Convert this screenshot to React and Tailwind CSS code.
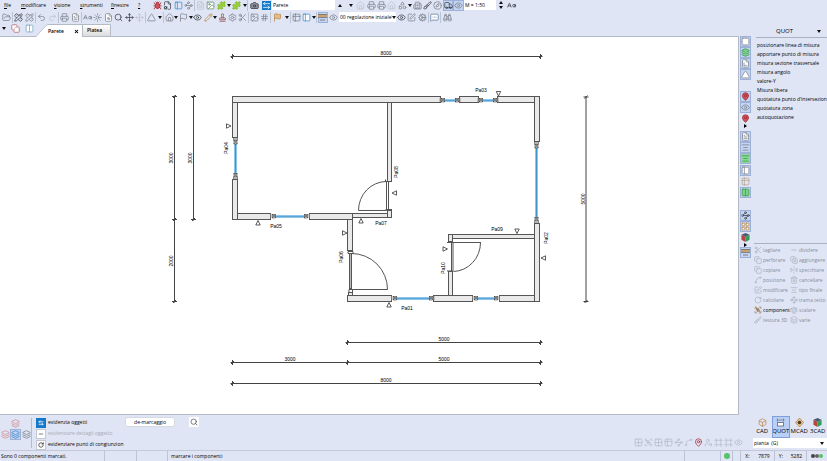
import React from "react";
import {
  FolderOpen, PencilRuler, Undo2, Redo2, Printer, FileText, CaseSensitive, Sun, FileSearch,
  Search, Move, Compass, House, Eye, Pencil, Settings, Copy, Trash2, RotateCw, Box, Layers,
  Binoculars, MessageSquareMore, Image, ArrowLeftRight, Scissors, Minus, CopyPlus, FlipHorizontal2,
  SquarePen, AlignCenter, Scale, Group, Waypoints, X, Triangle, Hash, Truck,
  PanelLeft, Camera, Brush, Grid2x2, Stamp, Frame, Table2, LayoutGrid, Shapes,
  UserSearch, Columns2, Puzzle, MapPin, Flag, FileAxis3d, Building2, Bug, FileCog, Spline, Cog,
} from "lucide-react";

const GRAY = "text-[#7c828d]";
const DARK = "text-[#3d424b]";
const FAINT = "text-[#bcc2cf]";
const PAPER = "text-[#7c828d] fill-white";
const RED = "text-[#a3262e] fill-[#d0565c]";
const ROSE = "text-[#cf8f95]";
const GREEN = "text-[#2f9e44] fill-[#7fd08d]";
const LIME = "text-[#7bb51d] fill-[#9bd03c]";
const BLUE = "text-[#3d8bcb]";
const SOLID_BLUE = "bg-[#1479c9] text-white";
const TAN = "text-[#b98a4c]";

function Caret({ up }) {
  return (
    <svg viewBox="0 0 4 3" className="h-[3px] w-[4px] shrink-0 fill-[#111]" aria-hidden="true">
      <path d={up ? "M0 3 2 0 4 3Z" : "M0 0h4L2 3Z"} />
    </svg>
  );
}

function Beam({ className }) {
  return (
    <svg viewBox="0 0 9 9" className={className} aria-hidden="true">
      <rect x="0" y="1" width="9" height="3" fill="#c9a36a" />
      <path d="M0 1.500h9M0 4.500h9M2 7h5" stroke="#6c6f78" strokeWidth=".8" />
    </svg>
  );
}

function Dimension({ className }) {
  return (
    <svg viewBox="0 0 9 9" className={className} aria-hidden="true">
      <rect x="1.500" y="4.500" width="6" height="3.500" fill="#fff" stroke="#777d88" />
      <path d="M.5 2h8M1.500.5v3M7.500.5v3" fill="none" stroke="#777d88" strokeWidth=".8" />
    </svg>
  );
}

function Cube({ className }) {
  return (
    <svg viewBox="0 0 10 10" className={className} aria-hidden="true">
      <path d="M5 0 9.500 2 5 4.500.5 2Z" fill="#4a5d6e" />
      <path d="M.5 2 5 4.500V10L.5 7.500Z" fill="#b8433f" />
      <path d="M9.500 2 5 4.500V10l4.500-2.500Z" fill="#2f9e57" />
    </svg>
  );
}

function Node({ className }) {
  return (
    <svg viewBox="0 0 10 10" className={className} aria-hidden="true">
      <path d="M5 0 9.500 5 5 10 .5 5Z" fill="#e7c08c" stroke="#a7763b" strokeWidth=".7" />
      <circle cx="5" cy="5" r="2" fill="#4b3a2a" />
    </svg>
  );
}

function Tool({ icon: Icon, color = GRAY, label, on, wide }) {
  return (
    <button
      type="button"
      aria-label={label}
      className={`flex h-[11px] shrink-0 items-center justify-center ${wide ? "w-[11px]" : "w-[10px]"} ${
        on ? "border border-[#9db1d8] bg-[#c4d3ef]" : ""
      }`}
    >
      <Icon className={`h-[9px] w-[9px] shrink-0 ${color}`} strokeWidth={2} />
    </button>
  );
}

function ToolGroup({ width, tools, last }) {
  return (
    <div className={`flex shrink-0 items-center justify-around ${width} ${last ? "" : "border-r border-[#bcc3d2]"}`}>
      {tools.map((t, i) =>
        t === "v" ? <Caret key={i} /> : <Tool key={i} icon={t[0]} color={t[1]} label={t[2]} on={t[3]} />
      )}
    </div>
  );
}

function MenuBar() {
  const menus = [
    ["f", "ile", "w-[17px]"], ["m", "odificare", "w-[33px]"], ["v", "isione", "w-[26px]"],
    ["s", "trumenti", "w-[31px]"], ["f", "inestre", "w-[27px]"], ["?", "", "w-[14px]"],
  ];
  return (
    <div className="flex h-[10px] items-center">
      <nav className="flex w-[152px] shrink-0 pl-[4px]">
        {menus.map(([k, rest, w], i) => (
          <button key={i} type="button" className={`shrink-0 text-left ${w}`}>
            <u>{k}</u>{rest}
          </button>
        ))}
      </nav>
      <ToolGroup width="w-[43px]" tools={[[Bug, RED, "Controllo"], [FileCog, DARK, "Impostazioni"], [PanelLeft, BLUE, "Pannello"], [Waypoints, GRAY, "Collega"]]} />
      <ToolGroup width="w-[53px]" tools={[[FileText, FAINT, "Foglio"], [Image, "text-[#5c8a66] fill-white", "Immagine"], [Puzzle, LIME, "Piano su"], "v", [Puzzle, LIME, "Piano giù"], "v"]} />
      <ToolGroup width="w-[24px]" last tools={[[Camera, "text-[#30343b] fill-[#8b9099]", "Camera"], [ArrowLeftRight, SOLID_BLUE, "Scambia"]]} />
      <input aria-label="Elemento" defaultValue="Parete" className="h-[10px] w-[63px] shrink-0 bg-white px-[1px]" />
      <div className="flex w-[108px] shrink-0 items-center justify-around">
        <button type="button" aria-label="Precedente" className="flex w-[10px] justify-center"><Caret up /></button>
        <button type="button" aria-label="Successivo" className="flex w-[10px] justify-center"><Caret /></button>
        <Tool icon={House} color={FAINT} label="Tetto" />
        <Tool icon={Printer} label="Piano superiore" />
        <Tool icon={Printer} label="Piano inferiore" />
        <Tool icon={House} color={FAINT} label="Edificio" />
        <Tool icon={Shapes} label="Forme" />
        <Caret />
        <Tool icon={Building2} label="Struttura" />
        <Tool icon={Brush} color={DARK} label="Pennello" />
        <Tool icon={Compass} label="Bussola" />
      </div>
      <div className="flex w-[21px] shrink-0">
        <Tool icon={Truck} color={DARK} label="Quote" on />
        <Tool icon={Eye} label="Vista quote" on wide />
      </div>
      <input aria-label="Scala" defaultValue="M = 1:50" className="h-[10px] w-[32px] shrink-0 bg-white px-[1px]" />
      <div className="flex w-[10px] shrink-0 flex-col items-center gap-[2px]"><Caret up /><Caret /></div>
      <Tool icon={CaseSensitive} color={DARK} label="Dimensione testo" />
    </div>
  );
}

function ToolBar() {
  return (
    <div className="flex h-[14px] items-center">
      <ToolGroup width="w-[13px]" tools={[[FolderOpen, GRAY, "Apri"]]} />
      <ToolGroup width="w-[23px]" tools={[[PencilRuler, DARK, "Strumenti"], [PencilRuler, GRAY, "Misure"]]} />
      <ToolGroup width="w-[23px]" tools={[[Undo2, GRAY, "Annulla"], [Redo2, FAINT, "Ripeti"]]} />
      <ToolGroup width="w-[23px]" tools={[[Printer, GRAY, "Stampa"], [FileText, PAPER, "Documento"]]} />
      <ToolGroup width="w-[64px]" tools={[[CaseSensitive, GRAY, "Testo"], [Sun, GRAY, "Luce"], [FileSearch, PAPER, "Anteprima"], [Search, DARK, "Zoom"], [Move, DARK, "Sposta"], [Move, FAINT, "Centra"]]} />
      <ToolGroup width="w-[18px]" tools={[[Triangle, GRAY, "Angolo"], "v"]} />
      <ToolGroup width="w-[85px]" tools={[[House, GRAY, "Casa"], "v", [Flag, GRAY, "Vista"], "v", [Eye, DARK, "Mostra"], [Pencil, TAN, "Disegna"], "v", [Stamp, "text-[#8a4a45]", "Timbro"], [Settings, GRAY, "Opzioni"], [Scissors, GRAY, "Taglia"]]} />
      <ToolGroup width="w-[22px]" tools={[[Image, GRAY, "Sfondo"], [Hash, GRAY, "Numeri"]]} />
      <ToolGroup width="w-[20px]" tools={[[Flag, "text-[#b98a4c] fill-[#e3bd85]", "Segnale"], "v"]} />
      <ToolGroup width="w-[26px]" tools={[[Table2, GRAY, "Tabella"], [PanelLeft, "text-[#3d8bcb] fill-white", "Finestre"], "v"]} />
      <ToolGroup width="w-[22px]" last tools={[[Beam, "", "Profilo", true], [Eye, GRAY, "Visibilità"]]} />
      <div className="relative flex w-[57px] shrink-0 items-center bg-white">
        <select aria-label="Regolazione" className="h-[10px] w-full appearance-none bg-white pl-[1px]">
          <option>00 regolazione iniziale'</option>
        </select>
        <span className="pointer-events-none absolute right-0 flex h-[10px] w-[4px] items-center bg-white"><Caret /></span>
      </div>
      <ToolGroup width="w-[33px]" tools={[[Eye, DARK, "Mostra tutto"], [SquarePen, GRAY, "Modifica vista"], [Cog, GRAY, "Configura"]]} />
      <ToolGroup width="w-[12px]" tools={[[MessageSquareMore, "text-[#56789b] fill-white", "Informazioni"]]} />
      <ToolGroup width="w-[12px]" last tools={[[Binoculars, GRAY, "Cerca"]]} />
    </div>
  );
}

function Tabs() {
  return (
    <div className="flex h-[13px] items-end border-b border-[#b4bac6]">
      <div className="flex h-full w-[36px] shrink-0 items-center justify-around pb-[3px]">
        <Caret />
        <Tool icon={Copy} color="text-[#b0626a] fill-white" label="Nuova finestra" />
        <Tool icon={Columns2} color="text-[#7ba6c4] fill-white" label="Affianca" />
      </div>
      <div className="-mb-px flex h-[13px] shrink-0">
        <svg viewBox="0 0 12 13" className="h-[13px] w-[12px]" aria-hidden="true">
          <path d="M0 13 10 1.5 12 .5V13Z" fill="#fff" />
          <path d="M0 12.5 10 1.5 12 .5" fill="none" stroke="#b4bac6" strokeWidth=".8" />
        </svg>
        <div className="flex w-[35px] items-center justify-between border-t border-r border-[#b4bac6] bg-white pr-[3px]">
          <button type="button" className="font-semibold">Parete</button>
          <button type="button" aria-label="Chiudi"><X className="h-[5px] w-[5px]" strokeWidth={5} /></button>
        </div>
      </div>
      <button type="button" className="h-[12px] w-[28px] shrink-0 rounded-tr-xs border-t border-r border-[#b4bac6] bg-linear-to-b from-white to-[#dcdcdc] pl-[4px] text-left font-semibold">
        Platea
      </button>
    </div>
  );
}

const WALLS = [
  [232.5, 96.5, 208, 6], [459.5, 96.5, 19, 6], [497.5, 96.5, 42, 6],
  [232.5, 102.5, 5, 35], [232.5, 179.5, 5, 40], [237.5, 213.5, 33, 6], [309.5, 213.5, 43, 6],
  [352.5, 213.5, 35, 4], [387.5, 102.5, 4, 79], [387.5, 210.5, 4, 7], [347.5, 219.5, 5, 31],
  [348.5, 292.5, 4, 3], [347.5, 295.5, 44, 6], [433.5, 295.5, 39, 6], [499.5, 295.5, 40, 6],
  [534.5, 96.5, 5, 45], [534.5, 223.5, 5, 78], [452.5, 234.5, 82, 4], [448.5, 234.5, 4, 7],
  [448.5, 271.5, 4, 24],
];
const WINDOWS_H = [[443, 457, 100], [481, 495, 100], [274, 306, 216], [395, 431, 298], [476, 496, 298]];
const WINDOWS_V = [[142, 175, 235], [146, 219, 536]];
const NAMES = [
  ["Pa03", 481, 92], ["Pa05", 276, 228], ["Pa07", 381, 225], ["Pa09", 497, 231], ["Pa01", 407, 310],
  ["Pa04", 228, 148, 1], ["Pa08", 398, 172, 1], ["Pa06", 343, 257, 1], ["Pa10", 445, 268, 1], ["Pa02", 548, 238, 1],
  ["8000", 386, 55], ["5000", 444, 341], ["3000", 290, 361], ["5000", 444, 361], ["8000", 386, 382],
  ["3000", 173, 158, 1], ["3000", 192, 158, 1], ["2000", 173, 261, 1], ["5000", 585, 199, 1],
];
const MARKS = [
  [258, 223, 0], [361, 221, 0], [389, 305, 0], [498.5, 93.5, 180], [517, 231, 180],
  [228.5, 126, 90], [344.5, 233, 90], [445, 249, 90], [394.5, 193, 270], [543.5, 258, 270],
];
const DIMS_H = [[56.5, [232.5, 540.5]], [342.5, [347.5, 540.5]], [362.5, [232.5, 347.5, 540.5]], [383.5, [232.5, 540.5]]];
const DIMS_V = [[174.5, [96.5, 219.5, 301.5]], [193.5, [96.5, 219.5]], [586, [97, 301.5]]];

function Jamb({ x, y }) {
  return (
    <g stroke="#444" strokeWidth=".6" fill="#d4d4d4">
      <rect x={x - 1.5} y={y - 1.5} width="3" height="3.500" />
      <path d={`M${x - 2} ${y + 2}l4-4M${x - 2} ${y - 2}l4 4`} />
    </g>
  );
}

function FloorPlan() {
  return (
    <svg viewBox="0 37 738 377" className="h-full w-full" role="img" aria-label="Pianta">
      {DIMS_H.map(([y, xs]) => (
        <g key={y} stroke="#444" strokeWidth="1">
          <path d={`M${xs[0] - 2} ${y}H${xs[xs.length - 1] + 2}`} />
          {xs.map((x) => <path key={x} d={`M${x} ${y - 2.5}v5M${x - 1.5} ${y + 1.5}l3-3`} />)}
        </g>
      ))}
      {DIMS_V.map(([x, ys]) => (
        <g key={x} stroke="#444" strokeWidth="1">
          <path d={`M${x} ${ys[0] - 1}V${ys[ys.length - 1] + 1}`} />
          {ys.map((y) => <path key={y} d={`M${x - 2.5} ${y}h5M${x - 1.5} ${y + 1.5}l3-3`} />)}
        </g>
      ))}
      {WALLS.map(([x, y, w, h]) => (
        <rect key={`${x}-${y}`} x={x} y={y} width={w} height={h} fill="#e9e9e9" stroke="#555" strokeWidth="1" />
      ))}
      {WINDOWS_H.map(([a, b, y]) => (
        <g key={`${a}-${y}`}>
          <rect x={a} y={y - 1} width={b - a} height="3" fill="#8cc4ea" />
          <path d={`M${a} ${y + 0.5}H${b}`} stroke="#5aa5d6" />
          <path d={`M${a - 3} ${y - 2}v4M${b + 3} ${y - 2}v4`} stroke="#999" />
          <Jamb x={a} y={y} /><Jamb x={b} y={y} />
        </g>
      ))}
      {WINDOWS_V.map(([a, b, x]) => (
        <g key={a}>
          <rect x={x - 1} y={a} width="3" height={b - a} fill="#8cc4ea" />
          <path d={`M${x + 0.5} ${a}V${b}`} stroke="#4193c9" />
          <Jamb x={x + 0.5} y={a} /><Jamb x={x + 0.5} y={b} />
          <path d={`M${x - 1.5} ${a - 4}h4v2h-4zM${x - 1.5} ${b + 2}h4v2h-4z`} fill="#ddd" stroke="#555" strokeWidth=".6" />
        </g>
      ))}
      <g fill="none" stroke="#555" strokeWidth="1">
        <path d="M386.5 181.5A28 29 0 0 0 358.5 210.5H386.5" />
        <path d="M386.5 181.5V210.5M388.5 181.5V210.5" />
        <path d="M385.5 179.5V182M385.5 209.5h6.5M385.5 181.5h6.5" />
        <path d="M351.5 253.5A36 36 0 0 1 387.5 289.5H350.5" />
        <rect x="349.5" y="253.5" width="2" height="35" fill="#bbb" />
        <path d="M348 251.5h5v2h-5zM349 289.5h3.500v3h-3.500z" />
        <path d="M480.5 242.5A28 29 0 0 1 453.500 271.500" />
        <path d="M447 242.500H481M453 242.500V271M451.500 242.500V271M447 271h6" />
      </g>
      {MARKS.map(([x, y, r]) => (
        <path key={`${x}-${y}`} d="M0-2.500 2.200 2H-2.200Z" transform={`translate(${x} ${y}) rotate(${r})`} fill="#fff" stroke="#333" strokeWidth=".8" />
      ))}
      {NAMES.map(([t, x, y, v]) => (
        <text key={`${x}-${y}`} textAnchor="middle" transform={`translate(${x} ${y})${v ? " rotate(-90)" : ""}`} className="fill-black font-['Liberation_Sans',sans-serif] text-[5px]">
          {t}
        </text>
      ))}
    </svg>
  );
}

function SideTools() {
  const groups = [
    ["h-[43px]", [[Grid2x2, PAPER, 1], [Layers, GREEN, 1], [FileAxis3d, PAPER, 1], [Triangle, PAPER, 1]]],
    ["h-[36px] mt-[12px]", [[MapPin, RED, 1], [Eye, GRAY, 1], [MapPin, RED, 0], "v"]],
    ["h-[33px] mt-[4px]", [[FileText, PAPER, 1], [AlignCenter, GRAY, 1], [AlignCenter, "text-[#2f9e44] bg-[#8fd79b]", 1]]],
    ["h-[33px] mt-[1px]", [[PanelLeft, PAPER, 1], [Table2, "text-[#b7a48d]", 0], [Columns2, GREEN, 1]]],
    ["h-[48px] mt-[12px]", [[Waypoints, DARK, 1], [LayoutGrid, "text-[#b98a4c] fill-white", 1], [Cube, "", 0], "v", [Beam, "", 1]]],
  ];
  return (
    <div className="w-[14px] shrink-0 pr-[1px]">
      {groups.map(([cls, tools], g) => (
        <div key={g} className={`flex flex-col items-center justify-between ${cls}`}>
          {tools.map((t, i) =>
            t === "v" ? (
              <span key={i} className="flex h-[4px] items-center"><svg viewBox="0 0 3 4" className="h-[4px] w-[3px]"><path d="M0 0 3 2 0 4Z" /></svg></span>
            ) : (
              <Tool key={i} icon={t[0]} color={t[1]} label={`Strumento ${g + 1}.${i + 1}`} on={!!t[2]} wide />
            )
          )}
        </div>
      ))}
    </div>
  );
}

function SidePanel() {
  const items = [
    "posizionare linea di misura", "apportare punto di misura", "misura sezione trasversale", "misura angolo",
    "valore-Y", "Misura libera", "quotatura punto d'intersezion", "quotatura zona", "autoquotazione",
  ];
  const edits = [
    [Scissors, "tagliare"], [Minus, "dividere"], [Copy, "perforare"], [CopyPlus, "aggiungere"],
    [Copy, "copiare"], [FlipHorizontal2, "specchiare"], [Spline, "posizione"], [Trash2, "cancellare"],
    [SquarePen, "modificare"], [AlignCenter, "tipo finale"], [RotateCw, "calcolare"], [Waypoints, "trama tetto"],
    [Group, "component"], [Scale, "scalare"], [Brush, "testura 3D"], [Layers, "varie"],
  ];
  return (
    <aside className="flex w-[74px] shrink-0 flex-col">
      <div className="ml-[3px] flex h-[13px] shrink-0 items-center justify-between border-b border-[#aab1c0] pr-[6px] pl-[20px] text-[6px]">
        <span>QUOT</span>
        <Caret />
      </div>
      <ul className="mt-[3px] ml-[4px]">
        {items.map((t) => (
          <li key={t} className="h-[9px]"><button type="button" className="block h-[9px] whitespace-nowrap">{t}</button></li>
        ))}
      </ul>
      <div className="mt-[121px] ml-[1px] grid grid-cols-[36px_1fr] border-t border-[#aab1c0] pt-[1px]">
        {edits.map(([Icon, t]) => {
          const on = t === "component";
          return (
            <button key={t} type="button" disabled={!on} className={`flex h-[10px] items-center gap-[1px] whitespace-nowrap ${on ? "text-black" : "text-[#868d9b]"}`}>
              <Icon className={`h-[8px] w-[8px] shrink-0 ${on ? "text-[#8a5a2a]" : "text-[#a9b0be]"}`} strokeWidth={2} />
              {t}
            </button>
          );
        })}
      </div>
    </aside>
  );
}

function BottomPanel() {
  const modes = [[Box, "CAD", TAN], [Dimension, "QUOT", ""], [Node, "MCAD", ""], [Cube, "3CAD", ""]];
  const rows = [
    [ArrowLeftRight, "evidenzia oggetti", "border-[#1479c9] bg-[#1479c9] text-white", ""],
    [Minus, "evidenziare dettagli oggetto", "border-[#c3c8d2] bg-white text-[#555]", "text-[#a4abb9]"],
    [RotateCw, "evidenziare punti di congiunzion", "border-[#c3c8d2] bg-white text-[#333]", ""],
  ];
  const snaps = [Grid2x2, Group, Grid2x2, Table2, Waypoints, Spline, MapPin, UserSearch, Frame, Frame, Eye];
  return (
    <div className="flex h-[35px] shrink-0">
      <div className="mt-[3px] flex h-[30px] w-[32px] shrink-0 flex-col items-center border-r border-[#b4bac6]">
        <Tool icon={Layers} color={ROSE} label="Livello superiore" />
        <div className="flex">
          <Tool icon={Layers} color={ROSE} label="Livelli" />
          <Tool icon={Layers} color={BLUE} label="Livello attivo" on wide />
          <Tool icon={Layers} label="Livello inferiore" />
        </div>
      </div>
      <div className="flex w-[91px] shrink-0 flex-col pt-[2px] pl-[4px]">
        {rows.map(([Icon, t, box, text]) => (
          <button key={t} type="button" className={`flex h-[11px] items-center gap-[2px] whitespace-nowrap ${text}`}>
            <span className={`flex h-[10px] w-[10px] shrink-0 items-center justify-center border ${box}`}>
              <Icon className="h-[6px] w-[6px]" strokeWidth={3} />
            </span>
            {t}
          </button>
        ))}
      </div>
      <div className="flex flex-1 items-start gap-[14px] pt-[2px] pl-[2px]">
        <button type="button" className="h-[10px] w-[50px] rounded-xs border border-[#d5d9e2] bg-white leading-[8px]">de-marcaggio</button>
        <button type="button" aria-label="Cerca oggetto" className="flex h-[10px] w-[10px] items-center justify-center bg-white text-[#3d424b]"><Search className="h-[8px] w-[8px]" /></button>
      </div>
      <div className="flex items-end pr-[10px] pb-[2px]">
        {snaps.map((Icon, i) => (
          <Tool key={i} icon={Icon} color={i === 6 ? "text-[#a3262e]" : "text-[#b5bbc8]"} label={`Aggancio ${i + 1}`} />
        ))}
      </div>
      <div className="w-[74px] shrink-0">
        <div className="grid h-[23px] grid-cols-4 pt-[1px]">
          {modes.map(([Icon, t, c]) => (
            <button key={t} type="button" className={`flex flex-col items-center justify-center leading-[9px] text-[6px] ${t === "QUOT" ? "bg-[#b9cff5] outline -outline-offset-1 outline-[#7f9fd6]" : ""}`}>
              <Icon className={`h-[9px] w-[9px] shrink-0 ${c}`} strokeWidth={2} />
              {t}
            </button>
          ))}
        </div>
        <div className="relative flex items-center">
          <select aria-label="Vista" className="h-[10px] w-full appearance-none bg-white pl-[1px]">
            <option>pianta&nbsp; (G)</option>
          </select>
          <span className="pointer-events-none absolute right-[3px]"><Caret /></span>
        </div>
      </div>
    </div>
  );
}

function StatusBar() {
  const cell = "flex shrink-0 items-center border-r border-[#bcc3d2]";
  return (
    <footer className="flex h-[11px] shrink-0 border-t border-[#c3c9d6]">
      <span className={`w-[105px] pl-[1px] ${cell}`}>Sono 0 componenti marcati.</span>
      <span className={`w-[32px] ${cell}`} />
      <span className={`w-[31px] ${cell}`} />
      <span className="flex flex-1 items-center border-r border-[#bcc3d2] pl-[3px]">marcare i componenti</span>
      <span className={`w-[36px] ${cell}`} />
      <span className={`w-[12px] justify-center ${cell}`}><i className="h-[6px] w-[6px] rounded-full bg-[#56c26a]" /></span>
      <span className={`w-[8px] ${cell}`} />
      <span className={`w-[34px] justify-around ${cell}`}><span>X:</span><span>7879</span></span>
      <span className={`w-[32px] justify-around ${cell}`}><span>Y:</span><span>5282</span></span>
      <span className="flex w-[20px] items-center justify-center">
        <i className="h-[4px] w-[4px] rounded-full bg-[#444]" />
        <i className="h-[4px] w-[4px] rounded-full bg-[#666]" />
        <i className="h-[4px] w-[4px] rounded-full bg-[#56c26a]" />
      </span>
    </footer>
  );
}

export default function App() {
  return (
    <div className="flex min-h-screen flex-col overflow-hidden bg-[#dfe5f4] font-['Open_Sans','Noto_Sans',sans-serif] text-[5px] leading-[9px] text-black">
      <MenuBar />
      <div className="flex flex-1">
        <main className="flex min-w-0 flex-1 flex-col">
          <ToolBar />
          <Tabs />
          <div className="flex flex-1">
            <div className="min-w-0 flex-1 border-r border-b border-[#b4bac6] bg-white"><FloorPlan /></div>
          </div>
        </main>
        <div className="flex shrink-0 pt-[15px]">
          <div className="pt-[11px]"><SideTools /></div>
          <SidePanel />
        </div>
      </div>
      <BottomPanel />
      <StatusBar />
    </div>
  );
}
